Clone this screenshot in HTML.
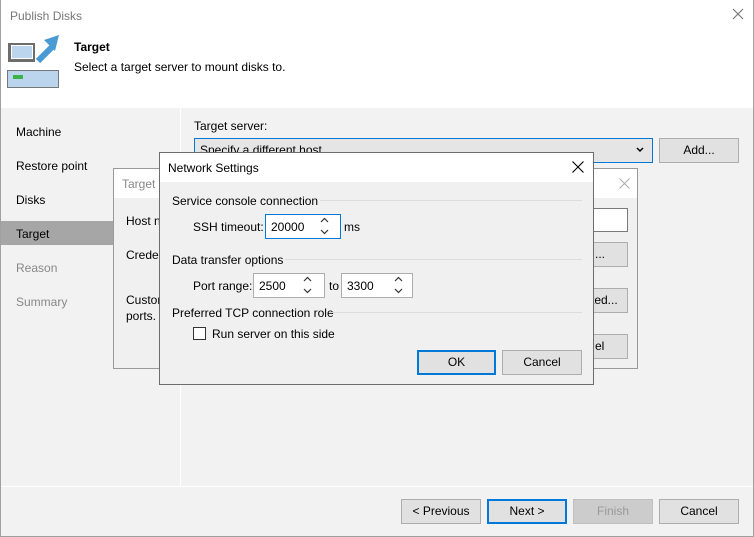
<!DOCTYPE html>
<html><head><style>
*{box-sizing:border-box;margin:0;padding:0}
body{width:754px;height:537px;position:relative;overflow:hidden;background:#f2f2f2;font-family:"Liberation Sans",sans-serif;font-size:12px;color:#000}
.a{position:absolute}
.btn{position:absolute;background:#e1e1e1;border:1px solid #adadad;text-align:center;line-height:22px}
.inp{position:absolute;background:#fff;border:1px solid #7a7a7a}
.grp{position:absolute;font-size:12px;color:#000}
.line{position:absolute;height:1px;background:#dcdcdc}
</style></head><body>
<div class="a" style="left:0;top:0;width:754px;height:537px;border:1px solid #a0a0a0;border-top:none"></div>
<div class="a" style="left:1px;top:0;width:752px;height:108px;background:#fff"></div>
<div class="a" style="left:10px;top:9px;color:#777;font-size:12px">Publish Disks</div>
<svg class="a" style="left:732px;top:8px" width="12" height="12"><path d="M1 1L11 11M11 1L1 11" stroke="#777" stroke-width="1.2"/></svg>
<svg class="a" style="left:0;top:30px" width="70" height="60">
<rect x="8" y="13" width="27" height="19" fill="#6d6d6d"/>
<rect x="11.5" y="15.5" width="21" height="13" fill="#bcd5ef" stroke="#fff" stroke-width="1"/>
<path d="M38 31L52 17" stroke="#4a9ad4" stroke-width="6"/>
<polygon points="44,10 59,5 55,21" fill="#4a9ad4"/>
<rect x="7.5" y="40.5" width="51" height="17" fill="#bcd5ef" stroke="#777"/>
<rect x="13" y="45" width="10" height="4" fill="#3cb34a"/>
</svg>
<div class="a" style="left:74px;top:40px;font-weight:bold;font-size:12px">Target</div>
<div class="a" style="left:74px;top:60px">Select a target server to mount disks to.</div>
<div class="a" style="left:180px;top:108px;width:1px;height:378px;background:#fff"></div>
<div class="a" style="left:1px;top:486px;width:752px;height:1px;background:#fff"></div>
<div class="a" style="left:16px;top:125px">Machine</div>
<div class="a" style="left:16px;top:159px">Restore point</div>
<div class="a" style="left:16px;top:193px">Disks</div>
<div class="a" style="left:1px;top:221px;width:112px;height:24px;background:#a6a6a6"></div>
<div class="a" style="left:16px;top:227px">Target</div>
<div class="a" style="left:16px;top:261px;color:#888">Reason</div>
<div class="a" style="left:16px;top:295px;color:#888">Summary</div>
<div class="a" style="left:194px;top:119px">Target server:</div>
<div class="a" style="left:194px;top:138px;width:459px;height:25px;background:#e5e5e5;border:1px solid #0078d7;padding:4px 5px">Specify a different host</div>
<svg class="a" style="left:636px;top:147px" width="8" height="6"><path d="M1 1L4 4L7 1" stroke="#000" stroke-width="1.5" fill="none"/></svg>
<div class="btn" style="left:659px;top:138px;width:80px;height:25px">Add...</div>
<!-- Target dialog -->
<div class="a" style="left:113px;top:168px;width:525px;height:201px;background:#f0f0f0;border:1px solid #999"></div>
<div class="a" style="left:114px;top:169px;width:523px;height:29px;background:#fff"></div>
<div class="a" style="left:122px;top:177px;color:#888">Target</div>
<svg class="a" style="left:619px;top:178px" width="11" height="11"><path d="M0.5 0.5L10.5 10.5M10.5 0.5L0.5 10.5" stroke="#aaa" stroke-width="1"/></svg>
<div class="a" style="left:126px;top:214px">Host n</div>
<div class="a" style="left:126px;top:248px">Creder</div>
<div class="a" style="left:126px;top:292px;line-height:16px">Custor<br>ports.</div>
<div class="inp" style="left:580px;top:208px;width:48px;height:24px"></div>
<div class="btn" style="left:580px;top:242px;width:48px;height:25px;text-align:left;padding-left:14px">...</div>
<div class="btn" style="left:580px;top:288px;width:48px;height:25px;text-align:left;padding-left:10px">ted...</div>
<div class="btn" style="left:580px;top:334px;width:48px;height:25px;text-align:left;padding-left:14px">el</div>
<!-- Network settings -->
<div class="a" style="left:159px;top:152px;width:435px;height:233px;background:#f0f0f0;border:1px solid #6d6d6d"></div>
<div class="a" style="left:160px;top:153px;width:433px;height:29px;background:#fff"></div>
<div class="a" style="left:168px;top:161px">Network Settings</div>
<svg class="a" style="left:572px;top:161px" width="12" height="12"><path d="M0.5 0.5L11.5 11.5M11.5 0.5L0.5 11.5" stroke="#000" stroke-width="1.1"/></svg>
<div class="grp" style="left:172px;top:194px">Service console connection</div>
<div class="line" style="left:320px;top:200px;width:262px"></div>
<div class="a" style="left:193px;top:220px">SSH timeout:</div>
<div class="inp" style="left:265px;top:214px;width:76px;height:25px;border-color:#0078d7;padding:5px 5px">20000</div>
<svg class="a" style="left:320px;top:217px" width="9" height="19"><path d="M1 5L4.5 1.5L8 5M1 13L4.5 16.5L8 13" stroke="#333" stroke-width="1.2" fill="none"/></svg>
<div class="a" style="left:344px;top:220px">ms</div>
<div class="grp" style="left:172px;top:253px">Data transfer options</div>
<div class="line" style="left:285px;top:259px;width:297px"></div>
<div class="a" style="left:193px;top:279px">Port range:</div>
<div class="inp" style="left:253px;top:273px;width:72px;height:25px;border-color:#adadad;padding:5px 5px">2500</div>
<svg class="a" style="left:303px;top:276px" width="9" height="19"><path d="M1 5L4.5 1.5L8 5M1 13L4.5 16.5L8 13" stroke="#333" stroke-width="1.2" fill="none"/></svg>
<div class="a" style="left:329px;top:279px">to</div>
<div class="inp" style="left:341px;top:273px;width:72px;height:25px;border-color:#adadad;padding:5px 5px">3300</div>
<svg class="a" style="left:394px;top:276px" width="9" height="19"><path d="M1 5L4.5 1.5L8 5M1 13L4.5 16.5L8 13" stroke="#333" stroke-width="1.2" fill="none"/></svg>
<div class="grp" style="left:172px;top:306px">Preferred TCP connection role</div>
<div class="line" style="left:330px;top:312px;width:252px"></div>
<div class="a" style="left:193px;top:327px;width:13px;height:13px;background:#fff;border:1px solid #333"></div>
<div class="a" style="left:212px;top:327px">Run server on this side</div>
<div class="btn" style="left:417px;top:350px;width:79px;height:25px;border:2px solid #0078d7;line-height:21px">OK</div>
<div class="btn" style="left:502px;top:350px;width:80px;height:25px">Cancel</div>
<!-- footer -->
<div class="btn" style="left:401px;top:499px;width:80px;height:25px">&lt; Previous</div>
<div class="btn" style="left:487px;top:499px;width:80px;height:25px;border:2px solid #0078d7;line-height:21px">Next &gt;</div>
<div class="btn" style="left:573px;top:499px;width:80px;height:25px;background:#ccc;border-color:#bfbfbf;color:#999">Finish</div>
<div class="btn" style="left:659px;top:499px;width:80px;height:25px">Cancel</div>
</body></html>
